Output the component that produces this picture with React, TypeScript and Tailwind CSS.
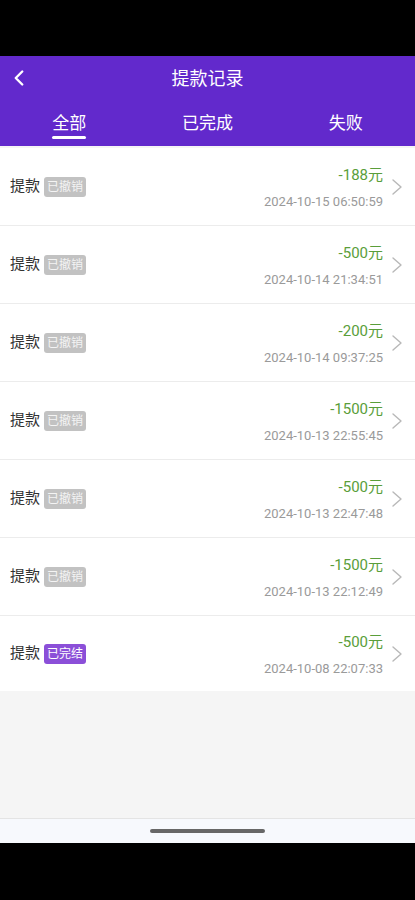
import { ChevronLeft } from "lucide-react";

type Record = {
  amount: string;
  time: string;
  done?: boolean;
};

const records: Record[] = [
  { amount: "-188元", time: "2024-10-15 06:50:59" },
  { amount: "-500元", time: "2024-10-14 21:34:51" },
  { amount: "-200元", time: "2024-10-14 09:37:25" },
  { amount: "-1500元", time: "2024-10-13 22:55:45" },
  { amount: "-500元", time: "2024-10-13 22:47:48" },
  { amount: "-1500元", time: "2024-10-13 22:12:49" },
  { amount: "-500元", time: "2024-10-08 22:07:33", done: true },
];

const tabs = ["全部", "已完成", "失败"];

function RecordRow({ amount, time, done }: Record) {
  return (
    <div className="flex items-center h-[78px] bg-white border-b border-[#ececec] last:border-b-0 last:h-[75px] pl-[10px] pr-[13px]">
      <span className="text-[15px] text-[#333]">提款</span>
      <span
        className={`ml-[4px] h-[20px] px-[3px] rounded-[3px] text-[12px] leading-[20px] ${
          done ? "bg-[#8b4fd8] text-white" : "bg-[#c2c2c2] text-[#f4f4f4]"
        }`}
      >
        {done ? "已完结" : "已撤销"}
      </span>
      <div className="ml-auto flex flex-col items-end gap-[8px] pt-[2px]">
        <span className="text-[15px] leading-[20px] text-[#5a9e3a]">{amount}</span>
        <span className="text-[13px] leading-[18px] text-[#9a9a9a]">{time}</span>
      </div>
      <svg className="ml-[9px] w-[10px] h-[16px]" viewBox="0 0 10 16" fill="none">
        <polyline points="1,1 9,8 1,15" stroke="#b8b8b8" strokeWidth="1.4" strokeLinecap="round" strokeLinejoin="round" />
      </svg>
    </div>
  );
}

export default function App() {
  return (
    <div
      className="w-[415px] h-[900px] flex flex-col bg-black"
      style={{ fontFamily: 'Roboto, "Noto Sans CJK SC", sans-serif' }}
    >
      <div className="h-[56px] shrink-0" />
      {/* header */}
      <div className="bg-[#6229cc] shrink-0">
        <div className="relative h-[44px] flex items-center justify-center">
          <ChevronLeft className="absolute left-[6px] top-[9px] w-[26px] h-[26px] text-white" strokeWidth={2.2} />
          <span className="text-[18px] text-white">提款记录</span>
        </div>
        <div className="grid grid-cols-3 h-[46px]">
          {tabs.map((t, i) => (
            <div key={t} className="flex flex-col items-center pt-[11px]">
              <span className="text-[17px] leading-[24px] text-white">{t}</span>
              {i === 0 && <span className="mt-[1px] w-[34px] h-[3px] rounded-full bg-white" />}
            </div>
          ))}
        </div>
      </div>
      {/* list */}
      <div className="flex-1 bg-[#f5f5f5] flex flex-col pt-[2px]">
        <div className="bg-white">
          {records.map((r) => (
            <RecordRow key={r.time} {...r} />
          ))}
        </div>
      </div>
      {/* bottom bar */}
      <div className="h-[25px] shrink-0 bg-[#f7f9fd] border-t border-[#e4e4e4] flex items-center justify-center">
        <span className="w-[115px] h-[4px] rounded-full bg-[#676767]" />
      </div>
      <div className="h-[57px] shrink-0" />
    </div>
  );
}
